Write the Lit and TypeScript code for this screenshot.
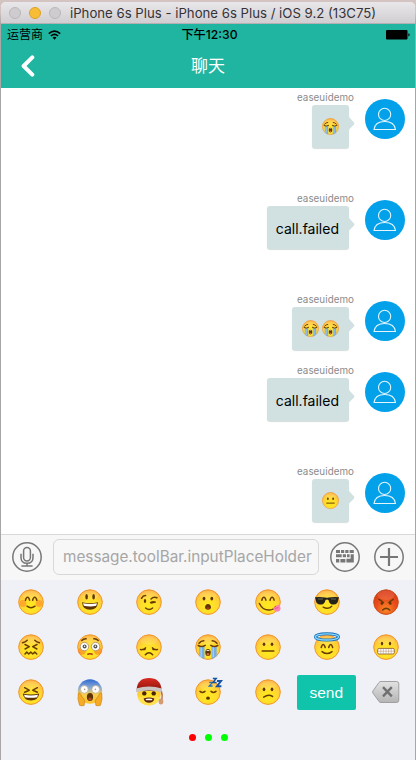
import { LitElement, html, css, svg } from "lit";
import { customElement, property } from "lit/decorators.js";

const INK = "#5f3505";

const FACES: Record<string, unknown> = {
  blush: svg`<circle cx="5" cy="14.5" r="3.4" fill="#ff7a2a" opacity=".5"/><circle cx="21" cy="14.5" r="3.4" fill="#ff7a2a" opacity=".5"/>
    <path class="l" d="M7.4 11.2q.9-3 2.2-3t2 3M14.6 11.2q.8-3 2.1-3t2.2 3M9 17.2q4 3 8 0"/>`,
  grin: svg`<ellipse class="f" cx="9.6" cy="7.8" rx="1.3" ry="2.7"/><ellipse class="f" cx="16.6" cy="7.8" rx="1.3" ry="2.7"/>
    <path class="f" d="M5 13.2q8 2 16 0q-.7 7.6-8 7.6t-8-7.6z"/><path d="M6 14.3q7 1.5 14 0l-.8 2.4q-6 1.4-12.4 0z" fill="#fff"/>`,
  wink: svg`<ellipse class="f" cx="9" cy="12" rx="1.2" ry="2"/><path class="l" d="M5.5 9.3q1.4-2.6 4.1-2.7M15 10q2.5-2.6 6-1.2M14.6 13.6q2-1.6 4.7-.5l-4 .8M9.6 19q3.6 3 7 0"/>`,
  open: svg`<ellipse class="f" cx="9" cy="9.6" rx="1.4" ry="1.9"/><ellipse class="f" cx="16.8" cy="9.6" rx="1.4" ry="1.9"/><path class="f" d="M10 18q.6-3 3-3t3 3q0 2.8-3 2.8T10 18z"/><path d="M11.2 19q1.8-1.4 3.6 0-.6 1-1.8 1t-1.8-1z" fill="#b93820"/>`,
  yum: svg`<path class="l" d="M6.8 11.2q.8-3 2.1-3t2 3M15 11.2q.8-3 2.1-3t2 3M4.4 14.5q3.4 7 10 6.6 4.6-.4 6.4-3.6"/>
    <path d="M18 19.5l5-4q2.6 1 2.6 3.6 0 3.6-3.6 3.6-2.4 0-4-3.2z" fill="#ff84b1"/><path d="M20 19.5l3.4-1" stroke="#d74f87" stroke-width=".8"/>`,
  cool: svg`<path d="M1 8.2q5-.6 10.4.2 1.6.5 3.2 0 5.4-.8 10.4-.2l-.6 2q-.7 5.4-4.6 5.4-4.6 0-5.3-4.7-1.5-1-3 0-.7 4.7-5.3 4.7-4 0-4.6-5.4z" fill="#242219"/><path d="M4 10h5M17 10h5" stroke="#81857d" stroke-width=".7"/><path class="l" d="M9.2 18.2q5 2.6 8.5-1"/>`,
  angry: svg`<path class="l" d="M6 10.4q1.6 1 4.4 3.2M20.2 10.4q-1.6 1-4.4 3.2M9.7 21q3.4-3.3 7 0"/><circle class="f" cx="8.9" cy="14.4" r="1.3"/><circle class="f" cx="17.3" cy="14.4" r="1.3"/>`,
  confounded: svg`<path class="l" d="M4.5 8.7q2.8-.4 4.7-2.4M21.5 8.7q-2.8-.4-4.7-2.4M7 10.5l4.3 2.2-4.2 2.3M19 10.5l-4.3 2.2 4.2 2.3M7 20l1.8-2 2 2 2-2 2 2 2-2 2 2"/>`,
  flushed: svg`<circle cx="5" cy="17" r="3.8" fill="#fa6b20" opacity=".5"/><circle cx="21" cy="17" r="3.8" fill="#fa6b20" opacity=".5"/>
    <circle cx="7.4" cy="12.6" r="4.2" fill="#fff" stroke="#a98b63" stroke-width=".8"/><circle cx="18.6" cy="12.6" r="4.2" fill="#fff" stroke="#a98b63" stroke-width=".8"/>
    <circle cx="7.6" cy="12.6" r="2" fill="#555"/><circle cx="18.4" cy="12.6" r="2" fill="#555"/><circle cx="7.6" cy="12.3" r=".7" fill="#fff"/><circle cx="18.4" cy="12.3" r=".7" fill="#fff"/>
    <path class="l" d="M4.8 6.5q2-2 4.3-1.7M21.2 6.5q-2-2-4.3-1.7"/><path d="M10.3 20.4q2.7-1.2 5.4 0" stroke="#aa381b" stroke-width="1.6" fill="none"/>`,
  sad: svg`<path class="l" d="M4.5 15.5q3 .6 5-1.6M21.5 15.5q-3 .6-5-1.6M9.3 20.8q3.7-4.2 7.4 0M7 15.6h2M17 15.6h2"/>`,
  cry: svg`<path d="M4.3 12.4h5.2V25q-3.1-.8-5.2-3zM16.5 12.4h5.2V22q-2.1 2.2-5.2 3z" fill="#76aee4"/><path d="M6.1 13v10M18.2 13v10" stroke="#b7dcf7"/>
    <path class="l" d="M4 9.3q2.1-2.5 4.8-2.5M22 9.3q-2.1-2.5-4.8-2.5M3.2 11.5q3.6 2 7-.2M22.8 11.5q-3.6 2-7-.2"/><ellipse class="f" cx="13" cy="18.5" rx="2.7" ry="3.5"/><path d="M11 16.9q2-1.7 4 0z" fill="#fff"/><circle cx="13" cy="20.3" r="1.3" fill="#d66a3a"/>`,
  neutral: svg`<ellipse class="f" cx="9" cy="10.3" rx="1.3" ry="1.8"/><ellipse class="f" cx="17" cy="10.3" rx="1.3" ry="1.8"/><path class="l" d="M7.2 17h11.6"/>`,
  angel: svg`<ellipse cx="13" cy="2.9" rx="11.6" ry="3.1" fill="none" stroke="#1670bb" stroke-width="2.9"/><ellipse cx="13" cy="2.9" rx="11.6" ry="3.1" fill="none" stroke="#88d8fb" stroke-width="1.3"/>
    <path class="l" d="M7.2 13.5q.9-3 2-3t2 3M14.7 13.5q.9-3 2-3t2 3M8 17.6q5 4 10 0"/>`,
  grimace: svg`<ellipse class="f" cx="9" cy="9.6" rx="1.2" ry="1.8"/><ellipse class="f" cx="17" cy="9.6" rx="1.2" ry="1.8"/><rect x="4.7" y="14.4" width="16.6" height="5.6" rx="1.4" fill="#fff" stroke="#9c7043"/><path d="M5 17.2h16M7.8 14.8v5M10.4 14.8v5M13 14.8v5M15.6 14.8v5M18.2 14.8v5" stroke="#b99b80" stroke-width=".6"/>`,
  laugh: svg`<path class="l" d="M6.6 8.7l4.6 2.5-4.6 2M19.4 8.7l-4.6 2.5 4.6 2"/><path class="f" d="M4.8 14.6q8.2 2 16.4 0-.7 6.8-8.2 6.8t-8.2-6.8z"/><path d="M6 15.7q7 1.4 14 0l-.9 2.5q-6 1.3-12.2 0z" fill="#fff"/>`,
  sleep: svg`<path class="l" d="M5 12.4q2.4 2 5 0M16 12.4q2.4 2 5 0"/><path class="f" d="M11 20q0-2.4 2-2.4t2 2.4q-2 1.4-4 0z"/><path d="M14.2 3.4h3.2l-3.2 3.6h3.4" stroke="#2a70bc" stroke-width="1.3" fill="none"/><path d="M17.8-.6h3.4l-3.2 4.2h3.6" stroke="#1454a2" stroke-width="1.5" fill="none"/><path d="M22 2h4l-4 5.2h4.4" stroke="#1453a5" stroke-width="2" fill="none"/>`,
  confused: svg`<ellipse class="f" cx="9" cy="10.3" rx="1.3" ry="1.9"/><ellipse class="f" cx="17" cy="10.3" rx="1.3" ry="1.9"/><path class="l" d="M8.7 18.2q4.8-3.3 8.9-.7"/>`,
};

@customElement("emoji-face")
export class EmojiFace extends LitElement {
  @property() name = "neutral";

  static styles = css`
    :host { display: block; width: 26px; height: 26px; flex: none; }
    svg { display: block; width: 100%; height: 100%; overflow: visible; }
    .l { fill: none; stroke: #6a3c06; stroke-width: 1.5; stroke-linecap: round; stroke-linejoin: round; }
    .f { fill: #5f3505; }
  `;

  private base() {
    if (this.name === "scream") {
      return svg`<circle cx="13" cy="12.5" r="12.2" fill="url(#blue)"/>
        <circle cx="7.3" cy="10.4" r="3.8" fill="#fff" stroke="#b8a57c" stroke-width=".6"/><circle cx="18.7" cy="10.4" r="3.8" fill="#fff" stroke="#b8a57c" stroke-width=".6"/>
        <circle cx="7.6" cy="10.4" r=".8" fill="#a59c89"/><circle cx="18.4" cy="10.4" r=".8" fill="#a59c89"/>
        <ellipse cx="13" cy="18" rx="3.1" ry="4.1" fill=${INK}/><ellipse cx="13" cy="20" rx="1.7" ry="1.5" fill="#b64b23"/>
        <path d="M1.3 14.3q1.4-1.4 2.4 1l1.5 3q2 1.2 2.5 3.4l-.6 4.8q-2.6.8-4.6-.3L1 20zM24.7 14.3q-1.4-1.4-2.4 1l-1.5 3q-2 1.2-2.5 3.4l.6 4.8q2.6.8 4.6-.3L25 20z" fill="#f5ab25" stroke="#cf8313" stroke-width=".7"/>`;
    }
    if (this.name === "santa") {
      return svg`<ellipse cx="13" cy="15.3" rx="11.7" ry="11" fill="url(#skin)"/>
        <path d="M.6 10.5Q1.5-1 13-1T25.6 10.5l-.4 1.5H1z" fill="url(#hat)"/><path d="M.1 9.4q12.9-4 25.8 0v3.8q-12.9-3.2-25.8 0z" fill="#c8c5c2"/>
        <circle cx="8.3" cy="14.4" r="2.2" fill="#49260a"/><circle cx="17.7" cy="14.4" r="2.2" fill="#49260a"/>
        <path d="M1.6 18q5 .4 11.4 0t11.4 0q-2.4 8.4-11.4 8.4T1.6 18z" fill="#ffe14d"/>
        <path d="M7.6 19.4q5.4-1.6 10.8 0-1 4.3-5.4 4.3t-5.4-4.3z" fill="#5d2306"/><path d="M9.5 20q3.5-.8 7 0l-.7 1.2h-5.6z" fill="#fff"/>
        <path d="M25.4 12.5q1.4 4 .4 8" stroke="#b8693f" stroke-width="1.5" fill="none"/><ellipse cx="25" cy="22.6" rx="2.3" ry="3" fill="#d59a72"/>`;
    }
    const fill = this.name === "angry" ? "url(#red)" : "url(#skin)";
    const rim = this.name === "angry" ? "#c94e19" : "#f0962a";
    return svg`<circle cx="13" cy="13.1" r="12.3" fill=${fill} stroke=${rim} stroke-width="1"/>
      <ellipse cx="13" cy="6.2" rx="8.6" ry="4.8" fill="#fff" opacity=".12"/>${FACES[this.name]}`;
  }

  render() {
    return html`<svg viewBox="0 0 26 26" aria-hidden="true">
      <defs>
        <radialGradient id="skin" cx=".5" cy=".68" r=".68"><stop offset="0" stop-color="#ffea1c"/><stop offset=".5" stop-color="#ffdc2c"/><stop offset=".8" stop-color="#ffc63c"/><stop offset="1" stop-color="#fda52e"/></radialGradient>
        <radialGradient id="red" cx=".5" cy=".8" r=".8"><stop offset="0" stop-color="#fb8a26"/><stop offset=".5" stop-color="#ea4f1b"/><stop offset="1" stop-color="#d63415"/></radialGradient>
        <linearGradient id="blue" x2="0" y2="1"><stop offset="0" stop-color="#2f6cd0"/><stop offset=".35" stop-color="#8dabd8"/><stop offset=".6" stop-color="#f3cd56"/><stop offset="1" stop-color="#ffc52d"/></linearGradient>
        <linearGradient id="hat" x2="0" y2="1"><stop offset="0" stop-color="#d92b22"/><stop offset="1" stop-color="#8b1309"/></linearGradient>
      </defs>${this.base()}</svg>`;
  }
}

interface Message { text?: string; faces?: string[]; compact?: boolean; }

const MESSAGES: Message[] = [
  { faces: ["cry"] },
  { text: "call.failed" },
  { faces: ["cry", "cry"], compact: true },
  { text: "call.failed" },
  { faces: ["neutral"] },
];

const KEYS = [
  "blush", "grin", "wink", "open", "yum", "cool", "angry",
  "confounded", "flushed", "sad", "cry", "neutral", "angel", "grimace",
  "laugh", "scream", "santa", "sleep", "confused",
];

@customElement("app-root")
export class AppRoot extends LitElement {
  static styles = css`
    :host {
      display: block; box-sizing: border-box; width: 416px; height: 760px; overflow: hidden;
      padding: 2px 1px 0; background: linear-gradient(#d3c3c1 0 12px, #a8a6a6 24px);
      font-family: Inter, "Noto Sans CJK SC", sans-serif;
    }
    * { box-sizing: border-box; }
    svg { display: block; flex: none; }
    .window { display: flex; flex-direction: column; height: 758px; border-radius: 5px 5px 0 0; overflow: hidden; background: #fff; }
    .title { flex: none; height: 22px; display: flex; align-items: center; padding: 1px 0 0 8px; border-bottom: 1px solid #b5b0b4; background: linear-gradient(#e9e7e9, #d1ced1); color: #353338; font-size: 13.2px; white-space: nowrap; }
    .light { width: 12px; height: 12px; margin-right: 8px; border-radius: 50%; background: #cfcccf; border: 1px solid #b9b6b9; }
    .light.on { background: #f7bd35; border-color: #dda02b; }
    .caption { margin-left: 1px; }
    .status { flex: none; height: 20px; display: grid; grid-template-columns: 1fr auto 1fr; align-items: center; padding: 0 5px 0 6px; background: #1fb5a0; color: #000; font-size: 12px; line-height: 22px; white-space: nowrap; }
    .carrier { display: flex; align-items: center; gap: 5px; }
    .clock { padding-left: 2px; font-size: 12.2px; font-weight: 500; }
    .battery { justify-self: end; }
    .nav { flex: none; height: 44px; display: grid; grid-template-columns: 1fr auto 1fr; align-items: center; background: #1fb5a0; color: #fff; font-size: 17px; line-height: 20px; }
    .back { margin-left: 19px; }
    .chat { flex: none; height: 446px; overflow: hidden; }
    .row { height: 101px; display: flex; justify-content: flex-end; padding-right: 10px; }
    .row.compact { height: 71px; }
    .body { display: flex; flex-direction: column; align-items: flex-end; margin-right: 10px; }
    .name { height: 17px; padding-right: 1px; line-height: 19px; font-size: 9.8px; letter-spacing: .05px; color: #8a8a8a; }
    .shape { display: flex; align-items: flex-start; }
    .bubble { height: 43px; min-width: 37px; padding: 0 10px; display: flex; align-items: center; gap: 3px; border-radius: 3px; background: #d1e0e0; color: #000; font-size: 14px; box-shadow: 0 1px 1px #d5dcdc; }
    .bubble.words { padding: 1px 10px 0 9px; }
    .bubble emoji-face { width: 17px; height: 17px; }
    .tail { margin-top: 12px; }
    .avatar { margin-top: 11px; }
    .bar { flex: none; height: 46px; display: flex; align-items: center; padding: 0 11px 1px; border-top: 1px solid #d9d9d9; background: #f7f7f7; }
    .input { width: 266px; height: 36px; margin: 0 11px; padding-left: 9px; display: flex; align-items: center; border: 1px solid #d8d8d8; border-radius: 6px; color: #a6a6a6; font-size: 15.3px; white-space: nowrap; }
    .hint { padding-bottom: 2px; }
    .plus { margin-left: 14px; }
    .panel { flex: 1; background: #f0f1f7; }
    .keys { display: grid; grid-template-columns: repeat(7, 1fr); grid-auto-rows: 45px; }
    .key { display: flex; align-items: center; justify-content: center; padding: 0 0 1px 1px; }
    .send { display: flex; align-items: center; justify-content: center; height: 35px; margin-top: 5px; border-radius: 2px; background: #10c4ab; color: #fff; font: 15.5px "Liberation Sans", Arial, sans-serif; }
    .dots { display: flex; justify-content: center; gap: 9px; padding: 19px 0 0; }
    .dot { width: 7px; height: 7px; border-radius: 50%; background: #0f0; }
    .dot.current { background: #f00; }
  `;

  private message(m: Message) {
    return html`<div class="row ${m.compact ? "compact" : ""}">
      <div class="body">
        <div class="name">easeuidemo</div>
        <div class="shape">
          <div class="bubble ${m.text ? "words" : ""}">${m.text ? html`<span>${m.text}</span>` : m.faces!.map((f) => html`<emoji-face .name=${f}></emoji-face>`)}</div>
          <svg class="tail" width="6" height="13" viewBox="0 0 6 13"><path d="M0 0l5 5.5q.8 1 0 2L0 12.5z" fill="#d1e0e0"/></svg>
        </div>
      </div>
      <svg class="avatar" width="40" height="40" viewBox="0 0 40 40"><circle cx="20" cy="20" r="20" fill="#04a1eb"/><g fill="none" stroke="#e4f5fd" stroke-width="1.1"><circle cx="19.6" cy="15.4" r="6.1"/><path d="M9 30.5q1-8 10.7-8t10.8 8z" stroke-linejoin="round"/></g></svg>
    </div>`;
  }

  render() {
    return html`<div class="window">
      <div class="title"><i class="light"></i><i class="light on"></i><i class="light"></i><span class="caption">iPhone 6s Plus - iPhone 6s Plus / iOS 9.2 (13C75)</span></div>
      <div class="status">
        <div class="carrier"><span>运营商</span><svg width="13" height="10" viewBox="0 0 13 10"><g fill="none" stroke="#000" stroke-width="1.6"><path d="M.8 3.6q5.7-5 11.4 0M2.9 6q3.6-3.1 7.2 0"/></g><path d="M4.5 7.6q2-1.5 4 0L6.5 9.8z"/></svg></div>
        <span class="clock">下午12:30</span>
        <svg class="battery" width="24" height="10" viewBox="0 0 24 10"><rect width="21.5" height="9.5" rx="1"/><path d="M22.4 3.2q1.2 0 1.2 1.6t-1.2 1.6z"/></svg>
      </div>
      <div class="nav">
        <svg class="back" width="15" height="22" viewBox="0 0 15 22"><path d="M12.3 2.4L3.6 11l8.7 8.6" fill="none" stroke="#fff" stroke-width="4" stroke-linejoin="round" stroke-linecap="round"/></svg>
        <span>聊天</span><span></span>
      </div>
      <div class="chat">${MESSAGES.map((m) => this.message(m))}</div>
      <div class="bar">
        <svg width="30" height="30" viewBox="0 0 30 30"><g fill="none" stroke="#777" stroke-width="1.5"><circle cx="15" cy="15" r="14.2"/><rect x="11.6" y="5.6" width="6.8" height="13.4" rx="3.4"/><path d="M9 11.8v3.6q0 5.8 6 5.8t6-5.8v-3.6M15 21.2v2.8M9.4 24.1h11.2"/></g></svg>
        <div class="input"><span class="hint">message.toolBar.inputPlaceHolder</span></div>
        <svg width="30" height="30" viewBox="0 0 30 30"><circle cx="15" cy="15" r="14.2" fill="none" stroke="#777" stroke-width="1.5"/><path fill="#777" d="M6 8h4v3H6zM11 8h3.2v3H11zM15.3 8h3.2v3h-3.2zM19.6 8h4.2v3h-4.2zM6 12.3h5.7v3H6zM12.8 12.3H16v3h-3.2zM17 12.3h2.6v3H17zM20.6 12.3h3.2v8.2h-7.4v-3.8h4.2zM6 16.9h3.3v3.6H6zM10.4 16.9h5v3.6h-5z"/></svg>
        <svg class="plus" width="30" height="30" viewBox="0 0 30 30"><g fill="none" stroke="#777"><circle cx="15" cy="15" r="14.2" stroke-width="1.5"/><path d="M15 6v18M6 15h18" stroke-width="2.2"/></g></svg>
      </div>
      <div class="panel">
        <div class="keys">
          ${KEYS.map((k) => html`<div class="key"><emoji-face .name=${k}></emoji-face></div>`)}
          <div class="send">send</div>
          <div class="key"><svg width="28" height="24" viewBox="0 0 28 24"><defs><linearGradient id="metal" x2="0" y2="1"><stop offset="0" stop-color="#e2e2e2"/><stop offset="1" stop-color="#b5b5b5"/></linearGradient></defs><path d="M9 1.5h15.5q2.3 0 2.3 2.3v16.4q0 2.3-2.3 2.3H9q-1.3 0-2-1L1 13.2q-.8-1.2 0-2.4L7 2.5q.7-1 2-1z" fill="url(#metal)" stroke="#999" stroke-width=".9"/><path d="M11 7.2l8.8 9.2M19.8 7.2L11 16.4" stroke="#707070" stroke-width="2.4"/></svg></div>
        </div>
        <div class="dots"><i class="dot current"></i><i class="dot"></i><i class="dot"></i></div>
      </div>
    </div>`;
  }
}
